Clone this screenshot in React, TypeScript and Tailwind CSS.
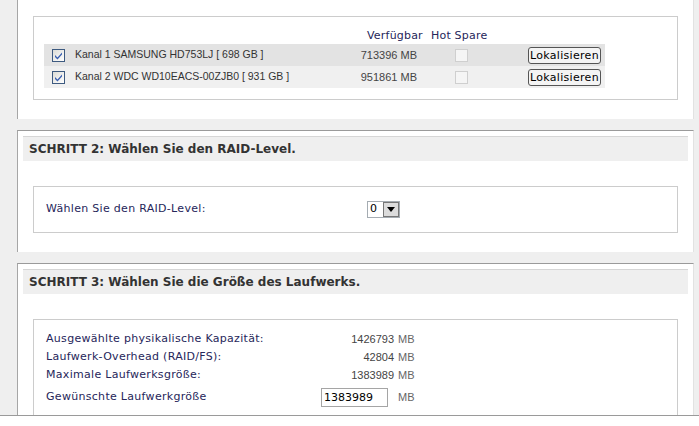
import React from "react";

const label = "font-['DejaVu_Sans',Verdana,sans-serif] text-[11px] tracking-[0.3px] text-[#26265a]";
const arial = "font-['Liberation_Sans',Arial,sans-serif] text-[11px]";

type Disk = { name: string; size: string; shade: string };

const disks: Disk[] = [
  { name: "Kanal 1 SAMSUNG HD753LJ [ 698 GB ]", size: "713396 MB", shade: "bg-[#e3e3e3]" },
  { name: "Kanal 2 WDC WD10EACS-00ZJB0 [ 931 GB ]", size: "951861 MB", shade: "bg-[#f0f0f0]" },
];

function CheckedBox() {
  return (
    <span className="flex h-[13px] w-[13px] items-center justify-center border border-[#3d5a80] bg-gradient-to-br from-[#dcdcd7] to-[#ffffff]">
      <svg width="9" height="9" viewBox="0 0 9 9">
        <path d="M1 4 L3.5 6.5 L8 1.5 L8 3.5 L3.5 8.5 L1 6 Z" fill="#3a5fb0" />
      </svg>
    </span>
  );
}

function DisabledBox() {
  return <span className="block h-[13px] w-[13px] border border-[#cfcfcf] bg-[#f5f5f5]" />;
}

function SectionHeader({ children }: { children: React.ReactNode }) {
  return (
    <div className="flex h-[25px] items-center border-t border-[#d6d6d6] bg-[#efefef] pl-[6px] font-['DejaVu_Sans',Verdana,sans-serif] text-[12px] font-bold text-[#333]">
      {children}
    </div>
  );
}

function RaidSelect() {
  return (
    <span className="inline-flex h-[17px] items-stretch border border-[#a5acb2] bg-white">
      <span className="flex w-[15px] items-center pl-[2px] font-['DejaVu_Sans',sans-serif] text-[11px] text-black">0</span>
      <span className="flex w-[16px] items-center justify-center border border-[#777] bg-[#dcdcdc]">
        <svg width="8" height="5" viewBox="0 0 8 5">
          <path d="M0 0 H8 L4 5 Z" fill="#000" />
        </svg>
      </span>
    </span>
  );
}

function SizeRow({ text, value }: { text: string; value: string }) {
  return (
    <div className="grid h-[18px] grid-cols-[274px_74px_auto] items-center">
      <span className={label}>{text}</span>
      <span className={`${arial} text-right text-[#444]`}>{value}</span>
      <span className={`${arial} pl-[4px] text-[#666]`}>MB</span>
    </div>
  );
}

export default function App() {
  return (
    <div className="h-[426px] w-[699px] overflow-hidden bg-white">
      <div className="flex h-[416px] flex-col gap-[11px] overflow-hidden border-b border-[#9a9a9a] bg-[#efefef] pl-[17px] pr-[5px]">
        {/* disk selection */}
        <div className="shrink-0 border-l border-r border-l-[#a6a6a6] border-r-[#e2e2e2] bg-white px-[5px] pb-[19px] pt-[16px]">
          <div className="mx-[10px] border border-[#cccccc] pb-[11px] pl-[10px] pt-[11px]">
            <div className="flex h-[16px] items-center font-['DejaVu_Sans',Verdana,sans-serif] text-[11px] tracking-[0.2px] text-[#26265a]">
              <span className="w-[323px]" />
              <span className="w-[64px] text-left">Verfügbar</span>
              <span className="w-[60px] text-left">Hot Spare</span>
            </div>
            {disks.map((d) => (
              <div key={d.name} className={`flex h-[22px] w-[561px] items-center ${d.shade}`}>
                <span className="flex w-[311px] items-center gap-[10px] pl-[8px]">
                  <CheckedBox />
                  <span className="font-['Liberation_Sans',Arial,sans-serif] text-[10.5px] text-[#333]">{d.name}</span>
                </span>
                <span className={`${arial} w-[62px] text-right text-[#444]`}>{d.size}</span>
                <span className="flex w-[88px] justify-center">
                  <DisabledBox />
                </span>
                <span className="flex flex-1 justify-end pr-[4px]">
                  <button className="h-[17px] w-[73px] rounded-[3px] border border-[#555] bg-[#f4f4f4] font-['DejaVu_Sans',Verdana,sans-serif] text-[11px] leading-none tracking-[0.3px] text-black">
                    Lokalisieren
                  </button>
                </span>
              </div>
            ))}
          </div>
        </div>

        {/* step 2 */}
        <div className="shrink-0 border-l border-r border-t border-l-[#a6a6a6] border-r-[#e2e2e2] border-t-[#9a9a9a] bg-white px-[5px] pb-[19px] pt-[5px]">
          <SectionHeader>SCHRITT 2: Wählen Sie den RAID-Level.</SectionHeader>
          <div className="mx-[10px] mt-[25px] flex h-[47px] items-center border border-[#cccccc] pl-[12px]">
            <span className={`${label} w-[321px]`}>Wählen Sie den RAID-Level:</span>
            <RaidSelect />
          </div>
        </div>

        {/* step 3 */}
        <div className="shrink-0 border-l border-r border-t border-l-[#a6a6a6] border-r-[#e2e2e2] border-t-[#9a9a9a] bg-white px-[5px] pt-[5px]">
          <SectionHeader>SCHRITT 3: Wählen Sie die Größe des Laufwerks.</SectionHeader>
          <div className="mx-[10px] mt-[25px] border border-[#cccccc] pb-[10px] pl-[12px] pt-[10px]">
            <SizeRow text="Ausgewählte physikalische Kapazität:" value="1426793" />
            <SizeRow text="Laufwerk-Overhead (RAID/FS):" value="42804" />
            <SizeRow text="Maximale Laufwerksgröße:" value="1383989" />
            <div className="mt-[4px] grid h-[19px] grid-cols-[274px_78px_auto] items-center">
              <span className={label}>Gewünschte Laufwerkgröße</span>
              <input
                readOnly
                value="1383989"
                className="ml-[1px] h-[19px] w-[67px] border border-[#a5a5a5] bg-white px-[2px] font-['DejaVu_Sans',Verdana,sans-serif] text-[11px] text-black outline-none"
              />
              <span className={`${arial} text-[#666]`}>MB</span>
            </div>
          </div>
        </div>
      </div>
    </div>
  );
}
